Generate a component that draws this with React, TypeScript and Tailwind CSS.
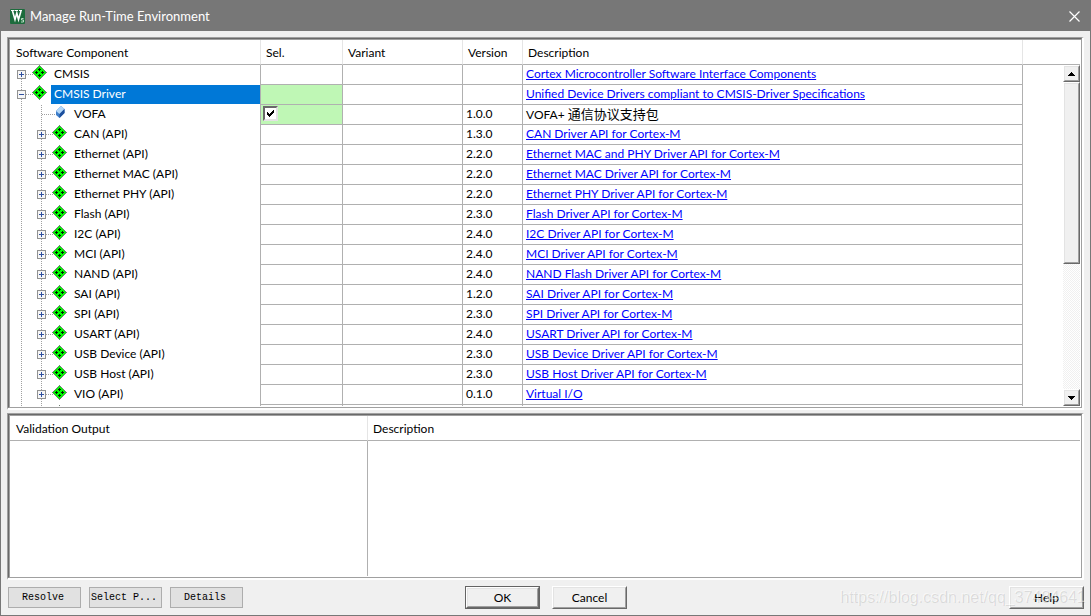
import React, { useState } from 'react';

interface Component {
    name: string;
    depth: number;
    kind: 'group' | 'pack' | 'open';
    version?: string;
    description: string;
}

const api = (name: string, version: string, description: string): Component => ({
    name: `${name} (API)`,
    depth: 1,
    kind: 'group',
    version,
    description,
});

const components: Component[] = [
    { name: 'CMSIS', depth: 0, kind: 'group', description: 'Cortex Microcontroller Software Interface Components' },
    { name: 'CMSIS Driver', depth: 0, kind: 'open', description: 'Unified Device Drivers compliant to CMSIS-Driver Specifications' },
    { name: 'VOFA', depth: 1, kind: 'pack', version: '1.0.0', description: '通信协议支持包' },
    api('CAN', '1.3.0', 'CAN Driver API for Cortex-M'),
    api('Ethernet', '2.2.0', 'Ethernet MAC and PHY Driver API for Cortex-M'),
    api('Ethernet MAC', '2.2.0', 'Ethernet MAC Driver API for Cortex-M'),
    api('Ethernet PHY', '2.2.0', 'Ethernet PHY Driver API for Cortex-M'),
    api('Flash', '2.3.0', 'Flash Driver API for Cortex-M'),
    api('I2C', '2.4.0', 'I2C Driver API for Cortex-M'),
    api('MCI', '2.4.0', 'MCI Driver API for Cortex-M'),
    api('NAND', '2.4.0', 'NAND Flash Driver API for Cortex-M'),
    api('SAI', '1.2.0', 'SAI Driver API for Cortex-M'),
    api('SPI', '2.3.0', 'SPI Driver API for Cortex-M'),
    api('USART', '2.4.0', 'USART Driver API for Cortex-M'),
    api('USB Device', '2.3.0', 'USB Device Driver API for Cortex-M'),
    api('USB Host', '2.3.0', 'USB Host Driver API for Cortex-M'),
    api('VIO', '0.1.0', 'Virtual I/O'),
];

const Diamond = () => (
    <svg width="15" height="15" viewBox="0 0 15 15" shapeRendering="crispEdges" className="block">
        <path d="M7.5 0 15 7.5 7.5 15 0 7.5Z" fill="#6f7f6f" />
        <path d="M7.5 1 14 7.5 7.5 14 1 7.5Z" fill="#00ff00" />
        <path d="M7 3h1v3h-1zM6 4h3v1h-3zM7 9h1v3h-1zM6 10h3v1h-3zM3 7h3v1h-3zM4 6h1v3h-1zM9 7h3v1h-3zM10 6h1v3h-1z" fill="#002000" />
    </svg>
);

const Gem = () => (
    <svg width="15" height="15" viewBox="0 0 15 15" className="block">
        <path d="M4 6 9 1 12.500 4 12.500 8 7.500 13 4 10Z" fill="#3f7fcb" />
        <path d="M4 6 9 1 12.500 4 7.500 9Z" fill="#b4d8f8" />
        <path d="M7.500 9 12.500 4 12.500 8 7.500 13Z" fill="#1d4f9c" />
    </svg>
);

const Expander: React.FC<{ open: boolean }> = ({ open }) => (
    <svg width="9" height="9" viewBox="0 0 9 9" shapeRendering="crispEdges" className="block">
        <rect width="9" height="9" fill="#919191" />
        <rect x="1" y="1" width="7" height="7" fill="#f6f6f6" />
        <path d={open ? 'M2 4h5v1h-5z' : 'M2 4h5v1h-5zM4 2h1v5h-1z'} fill="#3050a0" />
    </svg>
);

// Dotted connector lines of one tree row, drawn behind the icons
const Branch: React.FC<{ depth: number; first?: boolean }> = ({ depth, first }) => (
    <svg width="64" height="20" viewBox="0 0 64 20" shapeRendering="crispEdges" className="absolute top-0 left-0" fill="none" stroke="#a0a0a0" strokeDasharray="1 1">
        <path d={first ? 'M11.5 10V20' : 'M11.5 0V20'} />
        {depth === 1 && <path d="M31.5 0V20" />}
        <path d={depth === 1 ? 'M32 9.5H50' : 'M12 9.5H30'} />
    </svg>
);

const panel = 'border border-r-2 border-b-2 border-t-[#a0a0a0] border-l-[#a0a0a0] border-r-white border-b-white';
const panelInner = 'h-full border border-t-[#696969] border-l-[#696969] border-r-[#a0a0a0] border-b-[#a0a0a0] bg-white p-px shadow-[inset_1px_1px_0_#a0a0a0]';
const raised = 'border border-t-white border-l-white border-r-[#696969] border-b-[#696969]';
const raisedInner = 'flex items-center justify-center border border-t-[#e3e3e3] border-l-[#e3e3e3] border-r-[#a0a0a0] border-b-[#a0a0a0] bg-[#f0f0f0]';
const headCell = 'h-[25px] border-r border-r-[#e5e5e5] border-b border-b-[#b0b0b0] pt-px text-left font-normal';
const cell = 'h-5 border-r border-b border-[#b0b0b0] p-0 align-top';

const ScrollButton: React.FC<{ up?: boolean }> = ({ up }) => (
    <button aria-label={up ? 'Scroll up' : 'Scroll down'} className={`block h-[17px] w-[17px] shrink-0 ${raised}`}>
        <span className={`h-[15px] ${raisedInner}`}>
            <svg width="7" height="4" viewBox="0 0 7 4" shapeRendering="crispEdges">
                <path d={up ? 'M3 0h1v1h1v1h1v1h1v1H0V3h1V2h1V1h1z' : 'M0 0h7v1H6v1H5v1H4v1H3V3H2V2H1V1H0z'} />
            </svg>
        </span>
    </button>
);

const FlatButton: React.FC<{ children: React.ReactNode }> = ({ children }) => (
    <button className="h-[21px] w-[73px] overflow-hidden border border-[#adadad] bg-[#e1e1e1] pr-[3px] font-['Liberation_Mono',monospace] text-[10px] leading-4 whitespace-nowrap">
        {children}
    </button>
);

const App: React.FC = () => {
    const [vofa, setVofa] = useState(true);

    return (
        <div className="flex h-screen flex-col border border-[#777777] bg-[#f0f0f0] font-['Lato','Noto_Sans_CJK_SC',sans-serif] text-[12px] leading-4 text-black">
            <header className="flex h-[30px] shrink-0 items-center bg-[#777777] pr-[10px] pl-[9px] text-white">
                <svg width="15" height="15" viewBox="0 0 15 15" className="mr-[5px]">
                    <rect width="15" height="15" rx="1" fill="#1c6b3c" />
                    <path d="M1 1.500H4.500M5 1.500H8M9 1.500H12" stroke="#fff" />
                    <path d="M2.500 2 5 10.500 6.800 4 8.500 10.500 11 2" fill="none" stroke="#fff" strokeWidth="1.600" />
                    <path d="M13.500 9.500H11.500V11H13.500V13H11" fill="none" stroke="#b9dcc4" />
                </svg>
                <h1 className="flex-1 text-[13px]">Manage Run-Time Environment</h1>
                <button aria-label="Close">
                    <svg width="11" height="11" viewBox="0 0 11 11" stroke="#fff" strokeWidth="1.200">
                        <path d="M.5.5l10 10M10.500.5l-10 10" />
                    </svg>
                </button>
            </header>

            <main className="flex min-h-0 flex-1 flex-col gap-[3px] px-[6px] pt-[6px]">
                <section className={`min-h-0 flex-1 ${panel}`}>
                    <div className={`relative ${panelInner}`}>
                        <div className="h-full overflow-hidden">
                            <table className="w-full table-fixed border-separate border-spacing-0">
                                <colgroup>
                                    <col className="w-[251px]" />
                                    <col className="w-[82px]" />
                                    <col className="w-[120px]" />
                                    <col className="w-[60px]" />
                                    <col />
                                    <col className="w-[57px]" />
                                </colgroup>
                                <thead>
                                    <tr>
                                        <th className={`${headCell} pl-[6px]`}>Software Component</th>
                                        <th className={`${headCell} pl-[5px]`}>Sel.</th>
                                        <th className={`${headCell} pl-[5px]`}>Variant</th>
                                        <th className={`${headCell} pl-[5px]`}>Version</th>
                                        <th className={`${headCell} pl-[5px]`}>Description</th>
                                        <td className="border-b border-[#b0b0b0]" />
                                    </tr>
                                </thead>
                                <tbody>
                                    {components.map((c, i) => {
                                        const selected = c.kind === 'open';
                                        const pack = c.kind === 'pack';
                                        return (
                                            <tr key={c.name}>
                                                <td className="h-5 border-r border-[#b0b0b0] p-0">
                                                    <div className={`relative flex h-5 ${c.depth === 1 ? 'pl-[27px]' : 'pl-[7px]'}`}>
                                                        <Branch depth={c.depth} first={i === 0} />
                                                        <span className="relative flex h-[19px] w-[15px] items-center">
                                                            {!pack && <Expander open={selected} />}
                                                        </span>
                                                        <span className="relative w-[15px]">{pack ? <Gem /> : <Diamond />}</span>
                                                        <span className={`ml-1 h-[19px] flex-1 pl-[3px] leading-[18px] ${selected ? 'bg-[#0078d7] text-white' : ''}`}>
                                                            {c.name}
                                                        </span>
                                                    </div>
                                                </td>
                                                <td className={`${cell} ${selected || pack ? 'bg-[#bff7b5]' : ''}`}>
                                                    {pack && (
                                                        <label className="relative mt-px ml-[2px] block h-[15px] w-[15px]">
                                                            <input
                                                                type="checkbox"
                                                                aria-label="Select VOFA"
                                                                checked={vofa}
                                                                onChange={e => setVofa(e.target.checked)}
                                                                className="block h-[15px] w-[15px] appearance-none border-2 border-t-[#696969] border-r-[#e3e3e3] border-b-[#e3e3e3] border-l-[#696969] bg-white"
                                                            />
                                                            {vofa && (
                                                                <svg width="7" height="7" viewBox="0 0 7 7" shapeRendering="crispEdges" className="pointer-events-none absolute top-[4px] left-[4px]">
                                                                    <path d="M0 2h1v1h1v1h1V3h1V2h1V1h1V0h1v3H6v1H5v1H4v1H3v1H2V6H1V5H0z" />
                                                                </svg>
                                                            )}
                                                        </label>
                                                    )}
                                                </td>
                                                <td className={cell} />
                                                <td className={`${cell} pl-[3px] leading-[18px]`}>{c.version}</td>
                                                <td className={`${cell} pl-[3px] leading-[18px]`}>
                                                    {pack ? (
                                                        <>VOFA+ <span className="text-[13px]">{c.description}</span></>
                                                    ) : (
                                                        <a href="#" className="text-[#0000ff] underline">{c.description}</a>
                                                    )}
                                                </td>
                                                <td />
                                            </tr>
                                        );
                                    })}
                                    {/* next root node, only its top edge shows above the fold */}
                                    <tr aria-hidden="true">
                                        <td className="h-5 border-r border-[#b0b0b0] p-0">
                                            <div className="relative h-5 pl-[42px]">
                                                <Branch depth={1} />
                                                <Diamond />
                                            </div>
                                        </td>
                                        <td className={cell} />
                                        <td className={cell} />
                                        <td className={cell} />
                                        <td className={cell} />
                                        <td />
                                    </tr>
                                </tbody>
                            </table>
                        </div>

                        <div className="absolute top-[26px] right-px bottom-px flex w-[17px] flex-col bg-[repeating-conic-gradient(#ffffff_0_25%,#f0f0f0_0_50%)] bg-[length:2px_2px]">
                            <ScrollButton up />
                            <div className={`h-[182px] ${raised}`}>
                                <div className={`h-full ${raisedInner}`} />
                            </div>
                            <div className="flex-1" />
                            <ScrollButton />
                        </div>
                    </div>
                </section>

                <section className={`h-[167px] shrink-0 ${panel}`}>
                    <div className={`flex ${panelInner}`}>
                        <div className="flex w-[358px] flex-col">
                            <h2 className="h-[25px] border-r border-r-[#e5e5e5] border-b border-b-[#b0b0b0] pt-[5px] pl-[6px]">Validation Output</h2>
                            <div className="flex-1 border-r border-[#b0b0b0]" />
                        </div>
                        <div className="flex-1">
                            <h2 className="h-[25px] border-b border-[#b0b0b0] pt-[5px] pl-[5px]">Description</h2>
                        </div>
                    </div>
                </section>
            </main>

            <footer className="relative grid h-[35px] shrink-0 grid-cols-[1fr_auto_1fr] items-center pr-[6px] pl-[7px]">
                <div className="flex gap-2">
                    <FlatButton>Resolve</FlatButton>
                    <FlatButton>Select P...</FlatButton>
                    <FlatButton>Details</FlatButton>
                </div>
                <div className="flex gap-3">
                    <button className="h-[23px] w-[75px] border border-[#646464]">
                        <span className={`block h-[21px] ${raised}`}>
                            <span className={`h-[19px] ${raisedInner}`}>OK</span>
                        </span>
                    </button>
                    <button className={`h-[23px] w-[75px] ${raised}`}>
                        <span className={`h-[21px] ${raisedInner}`}>Cancel</span>
                    </button>
                </div>
                <button className={`h-[23px] w-[75px] justify-self-end ${raised}`}>
                    <span className={`h-[21px] ${raisedInner}`}>Help</span>
                </button>
                <span className="pointer-events-none absolute right-1 bottom-[9px] font-['Liberation_Sans',sans-serif] text-[16px] text-black/10 [text-shadow:-1px_-1px_0_#ffffff80]">
                    https://blog.csdn.net/qq_37484641
                </span>
            </footer>
        </div>
    );
};

export default App;
